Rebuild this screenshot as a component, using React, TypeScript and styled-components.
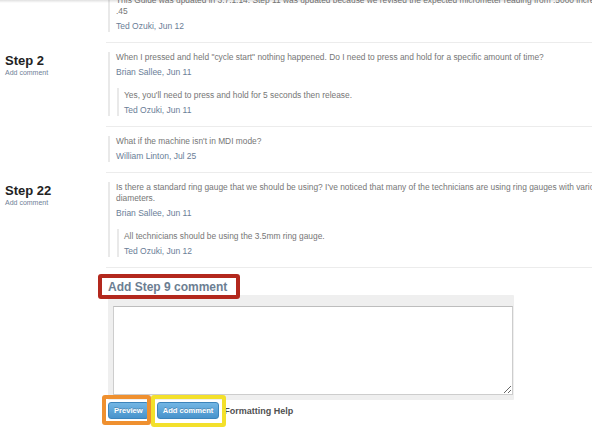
import React from "react";
import styled, { createGlobalStyle } from "styled-components";

const Global = createGlobalStyle`
  html, body { margin: 0; padding: 0; background: #fff; overflow: hidden; }
  body { font-family: "Liberation Sans", Arial, Helvetica, sans-serif; width: 592px; height: 444px; }
  #root { width: 592px; height: 444px; overflow: hidden; position: relative; }
`;

const TopShade = styled.div`
  position: absolute;
  left: 0;
  right: 0;
  top: 0;
  height: 3px;
  background: linear-gradient(rgba(0,0,0,0.12), rgba(0,0,0,0));
  z-index: 5;
`;

const Page = styled.div`
  width: 660px;
  margin-top: -14px;
`;

const StepRow = styled.section`
  display: grid;
  grid-template-columns: 106px 1fr;
`;

const StepHead = styled.div`
  padding: 10px 0 0 5px;
`;

const StepTitle = styled.h2`
  margin: 0;
  font-size: 13px;
  line-height: 15px;
  font-weight: bold;
  color: #222;
`;

const StepLink = styled.a`
  display: block;
  font-size: 7px;
  line-height: 9px;
  color: #6f8197;
  text-decoration: none;
`;

const Comments = styled.div`
  display: flex;
  flex-direction: column;
`;

const CommentItem = styled.div`
  padding: 9px 0 10px;
  border-bottom: 1px solid #ececec;
`;

const Block = styled.div<{ $nested?: boolean }>`
  border-left: 2px solid #e9e9e9;
  margin-left: ${(p) => (p.$nested ? "1px" : "2px")};
  margin-top: ${(p) => (p.$nested ? "10px" : "0")};
  padding: ${(p) => (p.$nested ? "2px 0 0 5px" : "0 0 0 6px")};
`;

const Text = styled.p`
  margin: 0 0 4px;
  font-size: 8.4px;
  line-height: 11px;
  color: #767676;
`;

const Author = styled.div`
  font-size: 8.5px;
  line-height: 11px;
  color: #6a7e97;
`;

const AddSection = styled.div`
  padding: 9px 0 0 108px;
`;

const HeadingWrap = styled.div`
  position: relative;
  display: inline-block;
`;

const Heading = styled.h3`
  margin: 0;
  font-size: 12px;
  line-height: 14px;
  font-weight: bold;
  color: #6c7e92;
`;

const Highlight = styled.span<{
  $color: string;
  $t: number;
  $r: number;
  $b: number;
  $l: number;
  $w?: number;
}>`
  position: absolute;
  top: ${(p) => p.$t}px;
  right: ${(p) => p.$r}px;
  bottom: ${(p) => p.$b}px;
  left: ${(p) => p.$l}px;
  border: ${(p) => p.$w ?? 4}px solid ${(p) => p.$color};
  border-radius: 3px;
  pointer-events: none;
`;

const Editor = styled.div`
  width: 406px;
  box-sizing: border-box;
  background: #efefef;
  padding: 11px 1px 5px 5px;
  border-radius: 1px;
`;

const TextArea = styled.textarea`
  display: block;
  width: 100%;
  height: 89px;
  box-sizing: border-box;
  border: 1px solid #cdcdcd;
  border-top-color: #bdbdbd;
  background: #fff;
  margin: 0;
  padding: 4px;
  font-family: inherit;
  font-size: 9px;
  outline: none;
`;

const ButtonRow = styled.div`
  display: flex;
  align-items: center;
  gap: 8px;
  margin-top: 2px;
`;

const BtnWrap = styled.span`
  position: relative;
  display: inline-flex;
`;

const Button = styled.button`
  height: 17px;
  padding: 0 5px;
  border: 1px solid #3c84bb;
  border-radius: 3px;
  background: linear-gradient(#73b6e4, #4893cc);
  color: #fff;
  font-family: inherit;
  font-size: 7.6px;
  font-weight: bold;
  text-shadow: 0 -1px 0 rgba(0, 0, 0, 0.2);
  cursor: pointer;
`;

const HelpLink = styled.a`
  margin-left: -3px;
  font-size: 9px;
  font-weight: bold;
  color: #505050;
  text-decoration: none;
`;

type C = { text: React.ReactNode; author: string; replies?: { text: string; author: string }[] };

const CommentView = ({ c }: { c: C }) => (
  <CommentItem>
    <Block>
      <Text>{c.text}</Text>
      <Author>{c.author}</Author>
      {c.replies?.map((r, i) => (
        <Block $nested key={i}>
          <Text>{r.text}</Text>
          <Author>{r.author}</Author>
        </Block>
      ))}
    </Block>
  </CommentItem>
);

const steps: { title?: string; comments: C[] }[] = [
  {
    comments: [
      {
        text: (
          <>
            This Guide was updated in 3.7.1.14. Step 11 was updated because we revised the expected micrometer reading from .5000 increments to
            <br />
            .45
          </>
        ),
        author: "Ted Ozuki, Jun 12",
      },
    ],
  },
  {
    title: "Step 2",
    comments: [
      {
        text: 'When I pressed and held "cycle start" nothing happened. Do I need to press and hold for a specific amount of time?',
        author: "Brian Sallee, Jun 11",
        replies: [{ text: "Yes, you'll need to press and hold for 5 seconds then release.", author: "Ted Ozuki, Jun 11" }],
      },
      { text: "What if the machine isn't in MDI mode?", author: "William Linton, Jul 25" },
    ],
  },
  {
    title: "Step 22",
    comments: [
      {
        text: (
          <>
            Is there a standard ring gauge that we should be using? I've noticed that many of the technicians are using ring gauges with various
            <br />
            diameters.
          </>
        ),
        author: "Brian Sallee, Jun 11",
        replies: [{ text: "All technicians should be using the 3.5mm ring gauge.", author: "Ted Ozuki, Jun 12" }],
      },
    ],
  },
];

export default function App() {
  return (
    <>
      <Global />
      <TopShade />
      <Page>
        {steps.map((s, i) => (
          <StepRow key={i}>
            <StepHead>
              {s.title && (
                <>
                  <StepTitle>{s.title}</StepTitle>
                  <StepLink href="#">Add comment</StepLink>
                </>
              )}
            </StepHead>
            <Comments>
              {s.comments.map((c, j) => (
                <CommentView c={c} key={j} />
              ))}
            </Comments>
          </StepRow>
        ))}
        <AddSection>
          <HeadingWrap>
            <Heading>Add Step 9 comment</Heading>
            <Highlight $color="#b3281d" $t={-6} $r={-13} $b={-5} $l={-10} />
          </HeadingWrap>
          <Editor>
            <TextArea />
          </Editor>
          <ButtonRow>
            <BtnWrap>
              <Button>Preview</Button>
              <Highlight $color="#ef902f" $t={-7} $r={-2} $b={-6} $l={-6} />
            </BtnWrap>
            <BtnWrap>
              <Button>Add comment</Button>
              <Highlight $color="#f3e02b" $t={-7} $r={-7} $b={-8} $l={-6} />
            </BtnWrap>
            <HelpLink href="#">Formatting Help</HelpLink>
          </ButtonRow>
        </AddSection>
      </Page>
    </>
  );
}
